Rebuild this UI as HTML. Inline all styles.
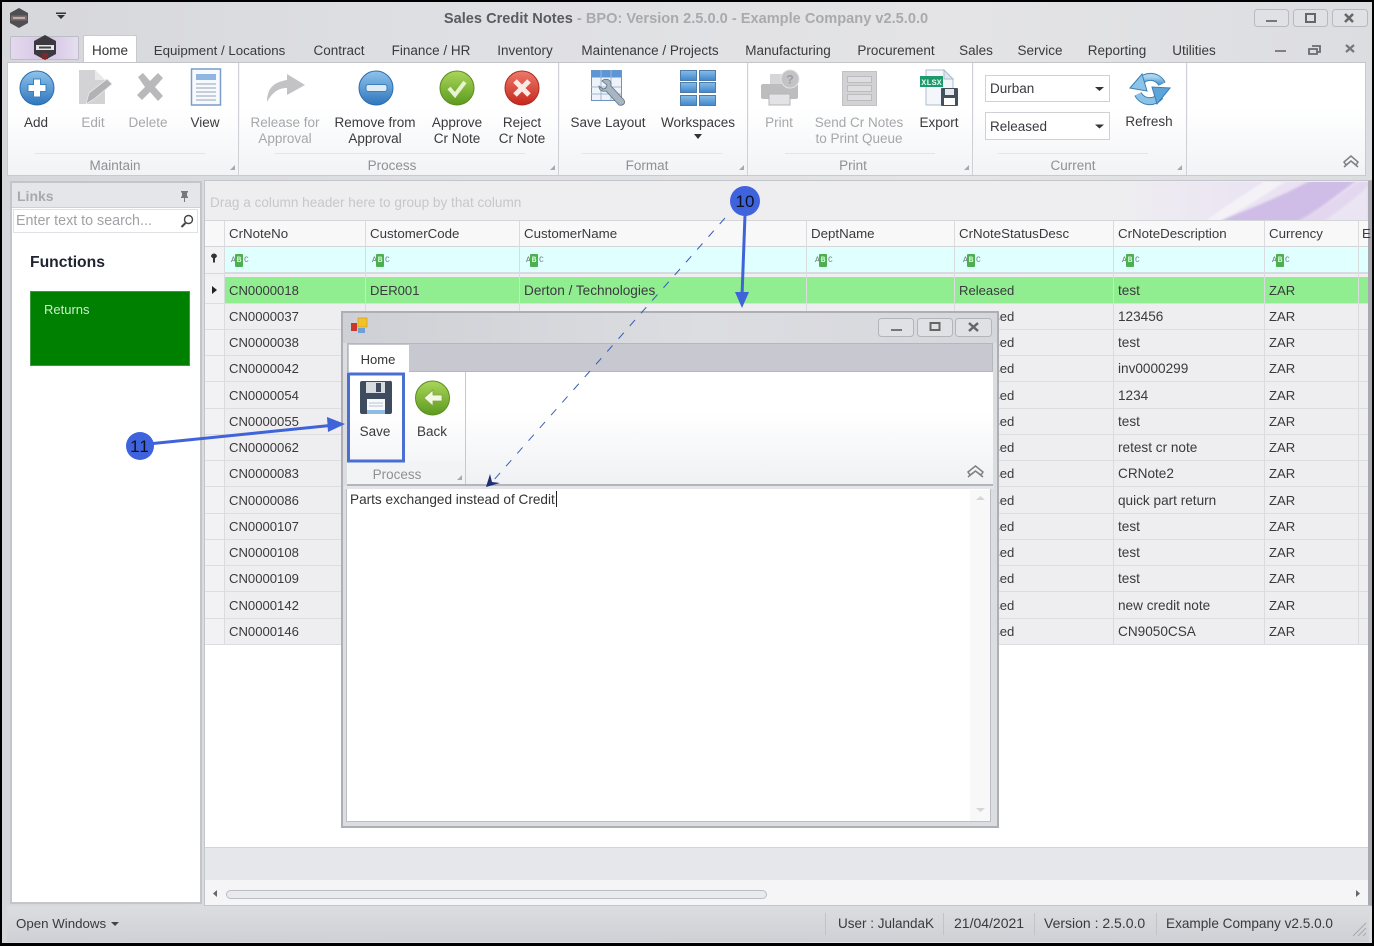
<!DOCTYPE html>
<html><head><meta charset="utf-8"><style>
*{box-sizing:border-box}
html,body{margin:0;padding:0;width:1374px;height:946px;overflow:hidden;background:#000}
#p{position:absolute;left:0;top:0;width:1374px;height:946px;background:#000;filter:blur(.35px)}
body{font-family:"Liberation Sans",sans-serif;font-size:13.5px;color:#3a3a3e}
div,span.t,.t{position:absolute}
.t{white-space:nowrap;line-height:16px;height:16px}
.c{transform:translateX(-50%);text-align:center}
.d{color:#a6a7aa}
.g{color:#8f9094}
svg{position:absolute;left:0;top:0;overflow:visible}
.r{position:absolute;left:0;width:1374px;height:16px;font-size:13.1px}
.r .t{top:0}
.a{left:229px}.b{left:370px}.e{left:524px;font-size:13.6px}.s{left:959px}.n{left:1118px;font-size:13.6px}.u{left:1269px}
.hd{font-size:13.3px}
.hd .e,.hd .n{font-size:13.3px}
.v{position:absolute;width:1px;background:#dadbdf}
.h{position:absolute;height:1px;background:#dcdde0;left:205px;width:1163px}
.abc{position:absolute;top:254px;width:20px;height:13px;font-size:8px;line-height:13px;color:#6d7a6d;font-family:"Liberation Mono",monospace}
.abc i{position:absolute;left:0;font-style:normal}
.abc b{position:absolute;left:4px;top:0;width:8px;height:13px;background:#4caf50;color:#d8f5d8;font-weight:bold;text-align:center;line-height:13px;border-radius:1px}
.abc em{position:absolute;left:13px;font-style:normal}
.sep{position:absolute;width:2px;background:#d0d1d6;border-right:1px solid #f6f6f8}
</style></head><body><div id="p">

<!-- window -->
<div style="left:2px;top:2px;width:1370px;height:941px;background:linear-gradient(90deg,#d6d7db 0,#dedfe3 30%,#e4e4e6 70%,#dcdde1 100%)"></div>

<!-- title -->
<div class="t c" style="left:686px;top:11px;font-weight:bold;font-size:14.6px;color:#a9aaae"><span style="color:#5a5b60">Sales Credit Notes</span> - BPO: Version 2.5.0.0 - Example Company v2.5.0.0</div>

<!-- tabs -->
<div style="left:10px;top:36px;width:69px;height:24px;background:linear-gradient(90deg,#e3d9ee,#d8c8e6 45%,#d9cde8 70%,#e6def0);border:1px solid #bdbdc6;border-radius:2px"></div>
<div style="left:83px;top:35px;width:54px;height:28px;background:#fff;border:1px solid #c9cace;border-bottom:0;border-radius:2px 2px 0 0"></div>
<div class="t c" style="left:110px;top:43px;color:#333">Home</div>
<div class="t c" style="left:219.500px;top:43px;font-size:13.300px">Equipment / Locations</div>
<div class="t c" style="left:339px;top:43px">Contract</div>
<div class="t c" style="left:431px;top:43px">Finance / HR</div>
<div class="t c" style="left:525px;top:43px">Inventory</div>
<div class="t c" style="left:650px;top:43px">Maintenance / Projects</div>
<div class="t c" style="left:788px;top:43px">Manufacturing</div>
<div class="t c" style="left:896px;top:43px">Procurement</div>
<div class="t c" style="left:976px;top:43px">Sales</div>
<div class="t c" style="left:1040px;top:43px">Service</div>
<div class="t c" style="left:1117px;top:43px">Reporting</div>
<div class="t c" style="left:1194px;top:43px">Utilities</div>

<!-- ribbon -->
<div style="left:7px;top:62px;width:1359px;height:114px;background:linear-gradient(180deg,#fff 0,#fff 40%,#f2f3f6 100%);border:1px solid #c9cace;border-top:1px solid #c4c5ca"></div>
<div class="sep" style="left:238px;top:63px;height:112px"></div>
<div class="sep" style="left:558px;top:63px;height:112px"></div>
<div class="sep" style="left:747px;top:63px;height:112px"></div>
<div class="sep" style="left:972px;top:63px;height:112px"></div>
<div class="sep" style="left:1186px;top:63px;height:112px"></div>
<div style="left:35px;top:153px;width:170px;height:1px;background:#e4e5e8"></div>
<div style="left:275px;top:153px;width:250px;height:1px;background:#e4e5e8"></div>
<div style="left:582px;top:153px;width:140px;height:1px;background:#e4e5e8"></div>
<div style="left:785px;top:153px;width:150px;height:1px;background:#e4e5e8"></div>
<div style="left:998px;top:153px;width:150px;height:1px;background:#e4e5e8"></div>

<div class="t c" style="left:36px;top:115px">Add</div>
<div class="t c d" style="left:93px;top:115px">Edit</div>
<div class="t c d" style="left:148px;top:115px">Delete</div>
<div class="t c" style="left:205px;top:115px">View</div>
<div class="t c d" style="left:285px;top:115px">Release for</div>
<div class="t c d" style="left:285px;top:131px">Approval</div>
<div class="t c" style="left:375px;top:115px">Remove from</div>
<div class="t c" style="left:375px;top:131px">Approval</div>
<div class="t c" style="left:457px;top:115px">Approve</div>
<div class="t c" style="left:457px;top:131px">Cr Note</div>
<div class="t c" style="left:522px;top:115px">Reject</div>
<div class="t c" style="left:522px;top:131px">Cr Note</div>
<div class="t c" style="left:608px;top:115px">Save Layout</div>
<div class="t c" style="left:698px;top:115px">Workspaces</div>
<div class="t c d" style="left:779px;top:115px">Print</div>
<div class="t c d" style="left:859px;top:115px">Send Cr Notes</div>
<div class="t c d" style="left:859px;top:131px">to Print Queue</div>
<div class="t c" style="left:939px;top:115px">Export</div>
<div class="t c" style="left:1149px;top:114px">Refresh</div>
<div class="t c g" style="left:115px;top:158px">Maintain</div>
<div class="t c g" style="left:392px;top:158px">Process</div>
<div class="t c g" style="left:647px;top:158px">Format</div>
<div class="t c g" style="left:853px;top:158px">Print</div>
<div class="t c g" style="left:1073px;top:158px">Current</div>

<div style="left:985px;top:75px;width:125px;height:27px;background:#fff;border:1px solid #d0d1d5"></div>
<div class="t" style="left:990px;top:81px">Durban</div>
<div style="left:985px;top:112px;width:125px;height:28px;background:#fff;border:1px solid #d0d1d5"></div>
<div class="t" style="left:990px;top:119px">Released</div>

<!-- links panel -->
<div style="left:10px;top:181px;width:192px;height:723px;background:#fff;border:2px solid #c4c5ca"></div>
<div style="left:12px;top:183px;width:188px;height:25px;background:#e5e6e9;border-bottom:1px solid #cfd0d4"></div>
<div class="t" style="left:17px;top:188px;font-weight:bold;color:#a8a9ae;font-size:14px">Links</div>
<div style="left:13px;top:209px;width:185px;height:24px;background:#fff;border:1px solid #e0e1e4"></div>
<div class="t" style="left:16px;top:213px;color:#a0a1a5;font-size:14.300px">Enter text to search...</div>
<div class="t" style="left:30px;top:254px;font-weight:bold;font-size:15.700px;color:#1f2430;line-height:17px">Functions</div>
<div style="left:30px;top:291px;width:160px;height:75px;background:#008000;border:1px solid #3f9a3f"></div>
<div class="t" style="left:44px;top:302px;color:#cdeecd;font-size:13px">Returns</div>

<!-- grid -->
<div style="left:204px;top:180px;width:1168px;height:726px;background:#fff;border:1px solid #c4c5ca;border-right:4px solid #a9aaaf"></div>
<div style="left:205px;top:181px;width:1163px;height:40px;background:#eeeef1;border-bottom:1px solid #d4d5d9"></div>
<svg width="1374" height="946" style="pointer-events:none">
<defs><filter id="sf"><feGaussianBlur stdDeviation="1"/></filter>
<linearGradient id="sw" x1="0" y1="0" x2="1" y2="0"><stop offset="0" stop-color="#eeeef1"/><stop offset=".5" stop-color="#ebe4f2"/><stop offset="1" stop-color="#e8dff2"/></linearGradient>
<clipPath id="gc"><rect x="1100" y="182" width="268" height="38"/></clipPath></defs>
<g clip-path="url(#gc)">
<rect x="1120" y="182" width="248" height="38" fill="url(#sw)"/>
<g filter="url(#sf)">
<path d="M1205 222C1225 205 1250 192 1268 178L1290 178C1270 192 1245 208 1218 222z" fill="#f4f2f7"/>
<path d="M1218 222C1245 210 1275 200 1315 178L1360 178C1340 192 1320 210 1296 222z" fill="#cfbde7"/>
<path d="M1296 222C1320 210 1345 192 1362 180L1370 180V222z" fill="#e2d7ef"/>
<path d="M1322 222C1340 210 1355 198 1368 186V222z" fill="#eae4f3"/>
</g></g>
</svg>
<div class="t" style="left:210px;top:195px;color:#c6c7cb;font-size:13.600px">Drag a column header here to group by that column</div>

<div style="left:205px;top:221px;width:1163px;height:26px;background:#f8f8f9;border-bottom:1px solid #d4d5d9"></div>
<div style="left:205px;top:247px;width:19px;height:26px;background:#f2f2f4"></div>
<div style="left:224px;top:247px;width:1144px;height:26px;background:#e0ffff;border-bottom:1px solid #d4dde0"></div>
<div style="left:205px;top:273px;width:1163px;height:4px;background:#f0f0f2;border-top:1px solid #d8d9dc"></div>

<div style="left:205px;top:277px;width:19px;height:367px;background:#f2f2f4"></div>
<div style="left:224px;top:303px;width:1144px;height:341px;background:#eeeef0"></div>
<div style="left:224px;top:277px;width:1144px;height:26px;background:#90ee90"></div>

<div class="h" style="top:303px"></div><div class="h" style="top:329px"></div><div class="h" style="top:355px"></div><div class="h" style="top:381px"></div><div class="h" style="top:408px"></div><div class="h" style="top:434px"></div><div class="h" style="top:460px"></div><div class="h" style="top:486px"></div><div class="h" style="top:513px"></div><div class="h" style="top:539px"></div><div class="h" style="top:565px"></div><div class="h" style="top:591px"></div><div class="h" style="top:618px"></div><div class="h" style="top:644px"></div>

<div class="v" style="left:224px;top:221px;height:423px"></div>
<div class="v" style="left:365px;top:221px;height:423px"></div>
<div class="v" style="left:519px;top:221px;height:423px"></div>
<div class="v" style="left:806px;top:221px;height:423px"></div>
<div class="v" style="left:954px;top:221px;height:423px"></div>
<div class="v" style="left:1113px;top:221px;height:423px"></div>
<div class="v" style="left:1264px;top:221px;height:423px"></div>
<div class="v" style="left:1358px;top:221px;height:423px"></div>

<div class="r hd" style="top:226px"><span class="t a">CrNoteNo</span><span class="t b">CustomerCode</span><span class="t e">CustomerName</span><span class="t" style="left:811px">DeptName</span><span class="t s">CrNoteStatusDesc</span><span class="t n">CrNoteDescription</span><span class="t u">Currency</span><span class="t" style="left:1362px">E</span></div>

<div class="abc" style="left:231px"><i>A</i><b>B</b><em>C</em></div>
<div class="abc" style="left:372px"><i>A</i><b>B</b><em>C</em></div>
<div class="abc" style="left:526px"><i>A</i><b>B</b><em>C</em></div>
<div class="abc" style="left:815px"><i>A</i><b>B</b><em>C</em></div>
<div class="abc" style="left:963px"><i>A</i><b>B</b><em>C</em></div>
<div class="abc" style="left:1122px"><i>A</i><b>B</b><em>C</em></div>
<div class="abc" style="left:1272px"><i>A</i><b>B</b><em>C</em></div>

<div class="r" style="top:283px"><span class="t a">CN0000018</span><span class="t b">DER001</span><span class="t e">Derton / Technologies</span><span class="t s">Released</span><span class="t n">test</span><span class="t u">ZAR</span></div>
<div class="r" style="top:309px"><span class="t a">CN0000037</span><span class="t s">Released</span><span class="t n">123456</span><span class="t u">ZAR</span></div>
<div class="r" style="top:335px"><span class="t a">CN0000038</span><span class="t s">Released</span><span class="t n">test</span><span class="t u">ZAR</span></div>
<div class="r" style="top:361px"><span class="t a">CN0000042</span><span class="t s">Released</span><span class="t n">inv0000299</span><span class="t u">ZAR</span></div>
<div class="r" style="top:388px"><span class="t a">CN0000054</span><span class="t s">Released</span><span class="t n">1234</span><span class="t u">ZAR</span></div>
<div class="r" style="top:414px"><span class="t a">CN0000055</span><span class="t s">Released</span><span class="t n">test</span><span class="t u">ZAR</span></div>
<div class="r" style="top:440px"><span class="t a">CN0000062</span><span class="t s">Released</span><span class="t n">retest cr note</span><span class="t u">ZAR</span></div>
<div class="r" style="top:466px"><span class="t a">CN0000083</span><span class="t s">Released</span><span class="t n">CRNote2</span><span class="t u">ZAR</span></div>
<div class="r" style="top:493px"><span class="t a">CN0000086</span><span class="t s">Released</span><span class="t n">quick part return</span><span class="t u">ZAR</span></div>
<div class="r" style="top:519px"><span class="t a">CN0000107</span><span class="t s">Released</span><span class="t n">test</span><span class="t u">ZAR</span></div>
<div class="r" style="top:545px"><span class="t a">CN0000108</span><span class="t s">Released</span><span class="t n">test</span><span class="t u">ZAR</span></div>
<div class="r" style="top:571px"><span class="t a">CN0000109</span><span class="t s">Released</span><span class="t n">test</span><span class="t u">ZAR</span></div>
<div class="r" style="top:598px"><span class="t a">CN0000142</span><span class="t s">Released</span><span class="t n">new credit note</span><span class="t u">ZAR</span></div>
<div class="r" style="top:624px"><span class="t a">CN0000146</span><span class="t s">Released</span><span class="t n">CN9050CSA</span><span class="t u">ZAR</span></div>

<!-- grid bottom -->
<div style="left:205px;top:847px;width:1163px;height:33px;background:#e6e7ea;border-top:1px solid #d2d3d7"></div>
<div style="left:205px;top:880px;width:1163px;height:25px;background:#f5f5f7"></div>
<div style="left:226px;top:890px;width:541px;height:9px;background:#e9eaed;border:1px solid #bcbdc2;border-radius:5px"></div>

<!-- status -->
<div style="left:7px;top:906px;width:1362px;height:36px;background:linear-gradient(180deg,#dcdde0,#cfd0d5)"></div>
<div class="t" style="left:16px;top:916px;font-size:13.300px">Open Windows</div>
<div class="t" style="left:838px;top:916px;font-size:13.500px">User : JulandaK</div>
<div class="t" style="left:954px;top:915px;font-size:14px">21/04/2021</div>
<div class="t" style="left:1044px;top:915px;font-size:14px">Version : 2.5.0.0</div>
<div class="t" style="left:1166px;top:916px;font-size:13.600px">Example Company v2.5.0.0</div>
<div class="v" style="left:825px;top:913px;height:22px;background:#c2c3c8"></div>
<div class="v" style="left:943px;top:913px;height:22px;background:#c2c3c8"></div>
<div class="v" style="left:1034px;top:913px;height:22px;background:#c2c3c8"></div>
<div class="v" style="left:1156px;top:913px;height:22px;background:#c2c3c8"></div>

<!-- main icons -->
<svg width="1374" height="946">
<defs>
<linearGradient id="bl" x1="0" y1="0" x2="0" y2="1"><stop offset="0" stop-color="#8fc3ea"/><stop offset="1" stop-color="#2f76bd"/></linearGradient>
<linearGradient id="gr" x1="0" y1="0" x2="0" y2="1"><stop offset="0" stop-color="#a9d65a"/><stop offset="1" stop-color="#5c9a1e"/></linearGradient>
<linearGradient id="rd" x1="0" y1="0" x2="0" y2="1"><stop offset="0" stop-color="#ee7a6a"/><stop offset="1" stop-color="#c5261c"/></linearGradient>
<linearGradient id="tb" x1="0" y1="0" x2="0" y2="1"><stop offset="0" stop-color="#88bde8"/><stop offset="1" stop-color="#3f86cc"/></linearGradient>
<linearGradient id="rf" x1="0" y1="0" x2="0" y2="1"><stop offset="0" stop-color="#a9d4ef"/><stop offset="1" stop-color="#4f98cf"/></linearGradient>
</defs>
<!-- app logo -->
<path d="M19 8l9 5v10l-9 5-9-5V13z" fill="#4f4f53"/><rect x="11" y="15.500" width="16" height="5" fill="#7e6a6a"/><rect x="13" y="17" width="12" height="2" fill="#b8b0b0"/>
<path d="M57 15h8l-4 4z M56 12.500h10v1.500H56z" fill="#333"/>
<path d="M45 35l11 6v13l-11 6-11-6V41z" fill="#3c3a3e"/><rect x="36" y="45" width="18" height="5" fill="#e8e8e8"/><rect x="39" y="46.500" width="12" height="2" fill="#444"/><rect x="42" y="53" width="6" height="6" fill="#7a2a2a"/>
<!-- win buttons -->
<g fill="#e0e1e5" stroke="#b9bac0"><rect x="1254.500" y="9.500" width="34" height="17" rx="3"/><rect x="1293.500" y="9.500" width="34" height="17" rx="3"/><rect x="1332.500" y="9.500" width="35" height="17" rx="3"/></g>
<rect x="1266" y="20" width="11" height="2" fill="#777"/>
<rect x="1306" y="14" width="9" height="8" fill="none" stroke="#666" stroke-width="2"/>
<path d="M1345 14l8 8m0-8l-8 8" stroke="#666" stroke-width="2.500"/>
<rect x="1275" y="50" width="11" height="2" fill="#808084"/>
<path d="M1312 46h8v6h-3M1309 49h8v5h-8z" fill="none" stroke="#6a6a70" stroke-width="1.800"/>
<path d="M1346 45l8 7m0-7l-8 7" stroke="#77777c" stroke-width="2.200"/>
<!-- add -->
<circle cx="37" cy="88" r="17" fill="url(#bl)" stroke="#2a6db0"/>
<path d="M33.500 79h7v5.500H46v7h-5.500V97h-7v-5.500H28v-7h5.500z" fill="#fff" stroke="#3c7fc0"/>
<!-- edit -->
<path d="M79 70h16l10 10v24H79z" fill="#d3d3d5"/><path d="M95 70l10 10H95z" fill="#e9e9ea"/>
<path d="M86 104l3-11 18-14 5 5-18 15z" fill="#b2b2b4" stroke="#e8e8e8" stroke-width=".8"/>
<!-- delete -->
<path d="M138 77l5-4 7 8 8-8 5 5-8 9 8 9-5 5-8-9-8 8-5-5 8-8z" fill="#b9b9bb"/>
<!-- view -->
<rect x="191.500" y="69" width="29" height="36" fill="#f6f9fd" stroke="#7c9cc8" stroke-width="1.500"/>
<rect x="196" y="74" width="20" height="6" fill="#8fb6e0"/>
<path d="M196 84h20M196 88h20M196 92h20M196 96h20M196 100h20" stroke="#a8b4c4" stroke-width="1.300"/>
<!-- release -->
<path d="M267 102c0-14 7-20 20-22v-6l18 11-18 10v-7c-9 0-15 5-20 14z" fill="#c3c3c5"/>
<!-- remove -->
<circle cx="376" cy="88" r="17" fill="url(#bl)" stroke="#2a6db0"/>
<rect x="366" y="84.500" width="21" height="7" rx="2.500" fill="#dfeaf5" stroke="#3c7fc0"/>
<!-- approve -->
<circle cx="457" cy="88" r="17" fill="url(#gr)" stroke="#5a8e1e"/>
<path d="M449 88l6 7 10-13" fill="none" stroke="#e8f3d2" stroke-width="4"/>
<!-- reject -->
<circle cx="522" cy="88" r="17" fill="url(#rd)" stroke="#ab2a20"/>
<path d="M515 81l14 14m0-14l-14 14" stroke="#fbe9e6" stroke-width="5"/>
<!-- save layout -->
<rect x="591.500" y="70.500" width="30" height="30" fill="#eef3f9" stroke="#6f94bf"/>
<rect x="591.500" y="70.500" width="30" height="7" fill="#5d96d6"/>
<path d="M591 87h30M591 94h30M601 70v30M611 70v30" stroke="#9db7d5"/>
<path d="M602 81c3-3 8-2 9 2 0 1 0 2 0 3l13 14c2 4-2 6-5 5l-13-14c-4 1-7-1-7-5l4 3 3-1 1-3z" fill="#a8b5c3" stroke="#5f6e7e" stroke-width=".8"/>
<!-- workspaces -->
<g fill="url(#tb)" stroke="#4d7cab"><rect x="680.500" y="70.500" width="16" height="10"/><rect x="699.500" y="70.500" width="16" height="10"/><rect x="680.500" y="82.500" width="16" height="10"/><rect x="699.500" y="82.500" width="16" height="10"/><rect x="680.500" y="95.500" width="16" height="10"/><rect x="699.500" y="95.500" width="16" height="10"/></g>
<path d="M694 134h8l-4 5z" fill="#333"/>
<!-- print -->
<rect x="770" y="74" width="20" height="16" fill="#d6d6d8"/>
<rect x="761" y="84" width="37" height="15" rx="2" fill="#bdbdbf"/>
<rect x="769" y="94" width="21" height="11" fill="#e3e3e5" stroke="#b5b5b7"/>
<circle cx="790" cy="79" r="9" fill="#c3c3c5" stroke="#e2e2e4"/>
<text x="790" y="83.500" font-size="12" font-weight="bold" text-anchor="middle" fill="#9c9c9e" font-family="Liberation Sans">?</text>
<!-- queue -->
<rect x="842.500" y="71.500" width="34" height="34" fill="#d2d2d4" stroke="#c2c2c4"/>
<g fill="#dedee0" stroke="#bcbcbe"><rect x="847.500" y="76.500" width="24" height="6"/><rect x="847.500" y="85.500" width="24" height="6"/><rect x="847.500" y="94.500" width="24" height="6"/></g>
<!-- export -->
<path d="M926 70h18l9 9v26h-27z" fill="#f3f6fa" stroke="#aebccd"/><path d="M944 70l9 9h-9z" fill="#dfe7f0" stroke="#aebccd"/>
<rect x="920" y="76" width="23" height="11" fill="#1d9a6c"/>
<text x="931.500" y="85" font-size="8.500" font-weight="bold" text-anchor="middle" fill="#e5f7ef" font-family="Liberation Mono">XLSX</text>
<rect x="941" y="88" width="17" height="18" rx="1" fill="#45505f"/><rect x="945" y="89" width="9" height="6" fill="#e5e8ec"/><rect x="944" y="98" width="11" height="7" fill="#fff"/>
<!-- refresh -->
<path d="M1140 82A13 13 0 0 1 1162 84" fill="none" stroke="#3c7fb5" stroke-width="8"/>
<path d="M1140 82A13 13 0 0 1 1162 84" fill="none" stroke="url(#rf)" stroke-width="6"/>
<path d="M1160 96A13 13 0 0 1 1138 94" fill="none" stroke="#3c7fb5" stroke-width="8"/>
<path d="M1160 96A13 13 0 0 1 1138 94" fill="none" stroke="#8cc2e6" stroke-width="6"/>
<path d="M1130 88L1142 74L1147 91z" fill="#8cc4e8" stroke="#3c7fb5"/>
<path d="M1170 88L1157 104L1152 87z" fill="#5da4d8" stroke="#3c7fb5"/>
<!-- combos -->
<path d="M1095 87h9l-4.500 4z M1095 124.500h9l-4.500 4z" fill="#333"/>
<!-- group grips -->
<g fill="#a8a9ad"><path d="M235 170v-5l-5 5z"/><path d="M555 170v-5l-5 5z"/><path d="M744 170v-5l-5 5z"/><path d="M969 170v-5l-5 5z"/><path d="M1182 170v-5l-5 5z"/></g>
<path d="M1344 162l7-6 7 6-2 3-5-4-5 4z M1344 167l7-6 7 6" fill="none" stroke="#808186" stroke-width="1.500"/>
<!-- pin -->
<path d="M181 191h7v1l-1 1v3l1 1v1h-3v4h-1v-4h-3v-1l1-1v-3l-1-1z" fill="#77777c"/>
<!-- search -->
<circle cx="188.500" cy="219.500" r="4" fill="none" stroke="#444" stroke-width="1.400"/><path d="M185.500 223l-4 4" stroke="#444" stroke-width="2"/>
<!-- filter funnel/marker -->
<path d="M211 256.500a3 3 0 1 1 6 0l-2 2v4h-2v-4z" fill="#333"/>
<path d="M212 286l5 4-5 4z" fill="#222"/>
<!-- scroll arrows, status -->
<path d="M217 890v7l-4-3.500z" fill="#666"/><path d="M1356 890v7l4-3.500z" fill="#666"/>
<path d="M111 922h8l-4 4z" fill="#444"/>
<path d="M1353 936l13-13M1358 936l8-8M1363 936l3-3" stroke="#a8a9ad" fill="none"/>
</svg>

<!-- dialog -->
<div style="left:341px;top:311px;width:658px;height:517px;background:#dcdde1;border:2px solid #aeafb4"></div>
<div style="left:343px;top:313px;width:654px;height:30px;background:linear-gradient(90deg,#cfd0d5,#dcdde1 55%,#d6d7dc)"></div>
<div style="left:347px;top:343px;width:646px;height:29px;background:#c8c9d0;border:1px solid #b6b7be;border-bottom:1px solid #b6b7be"></div>
<div style="left:349px;top:345px;width:60px;height:28px;background:#fff"></div>
<div class="t c" style="left:378px;top:352px;font-size:13px;color:#333">Home</div>
<div style="left:347px;top:372px;width:646px;height:114px;background:linear-gradient(180deg,#fff 0,#fff 35%,#f0f1f4 100%);border-bottom:2px solid #b4b5ba"></div>
<div style="left:347px;top:462px;width:118px;height:22px;background:#f2f3f5"></div>
<div class="sep" style="left:465px;top:372px;height:112px;background:#c8c9ce;width:1px;border:0"></div>
<div class="t c" style="left:375px;top:424px;color:#3a3a3e">Save</div>
<div class="t c" style="left:432px;top:424px;color:#3a3a3e">Back</div>
<div class="t c g" style="left:397px;top:467px">Process</div>
<div style="left:346px;top:489px;width:645px;height:333px;background:#fff;border:1px solid #bdbec3;border-top:0"></div>
<div style="left:970px;top:490px;width:20px;height:331px;background:#f8f8f9"></div>
<div class="t" style="left:350px;top:492px;color:#333;font-size:13.600px">Parts exchanged instead of Credit</div>
<div style="left:556px;top:491px;width:1px;height:16px;background:#222"></div>
<div style="left:344px;top:486px;width:650px;height:3px;background:#e4e5e8"></div>
<div style="left:344px;top:823px;width:650px;height:3px;background:#dcdde1"></div>

<svg width="1374" height="946">
<!-- dialog icon -->
<rect x="351" y="323" width="6" height="8" fill="#c9362b"/><rect x="358" y="318" width="9" height="9" fill="#f2c12e" stroke="#c99a18" stroke-width=".6"/><rect x="358" y="328" width="7" height="5" fill="#6d9fd8"/>
<!-- dialog buttons -->
<g fill="#e0e1e5" stroke="#b4b5bb"><rect x="878.500" y="318.500" width="35" height="18" rx="3"/><rect x="917.500" y="318.500" width="35" height="18" rx="3"/><rect x="955.500" y="318.500" width="36" height="18" rx="3"/></g>
<rect x="891" y="329" width="11" height="2" fill="#777"/>
<rect x="930.500" y="323" width="9" height="7" fill="none" stroke="#666" stroke-width="2"/>
<path d="M969 323l9 8m0-8l-9 8" stroke="#666" stroke-width="2.500"/>
<!-- save -->
<path d="M360 383a2 2 0 0 1 2-2h27a2 2 0 0 1 3 2v29a2 2 0 0 1-2 2h-28a2 2 0 0 1-2-2z" fill="#3f4c60"/>
<rect x="366" y="382" width="19" height="11" fill="#d7dbe0"/><rect x="376" y="383" width="5" height="9" fill="#3f4c60"/>
<rect x="367" y="399" width="18" height="15" fill="#f7f9fb"/><path d="M369 403h14M369 406h14" stroke="#b9c4d0"/><rect x="367" y="410" width="18" height="4" fill="#8fbce0"/>
<!-- back -->
<circle cx="432.500" cy="398" r="17" fill="url(#gr)" stroke="#5a8e1e"/>
<path d="M424 398l9-8v5h9v6h-9v5z" fill="#f2f7e6" stroke="#7ea83c" stroke-width=".8"/>
<!-- misc -->
<path d="M462 480v-5l-5 5z" fill="#a8a9ad"/>
<path d="M968 472l7.500-6 7.500 6-2 3-5.500-4-5.500 4z M968 477l7.500-6 7.500 6" fill="none" stroke="#808186" stroke-width="1.500"/>
<path d="M976 500h9l-4.500-4z M976 808h9l-4.500 4z" fill="#d4d5d8"/>
<!-- annotations -->
<rect x="348.500" y="374" width="55" height="87" fill="none" stroke="#4a6fd1" stroke-width="3"/>
<path d="M725 218L493 481" stroke="#3d5fb5" stroke-width="1" stroke-dasharray="8 9" fill="none"/>
<path d="M486 487l4-13 2 8 8 1z" fill="#1e2f73"/>
<path d="M745 215L742 296" stroke="#3f63d8" stroke-width="3"/>
<path d="M735 292h14l-7 16z" fill="#3f63d8"/>
<path d="M153 443.500L330 425.500" stroke="#3f63d8" stroke-width="3"/>
<path d="M327 417l18 7-17 8z" fill="#3f63d8"/>
<circle cx="745" cy="201" r="15" fill="#3f63dd"/>
<circle cx="140" cy="446" r="14" fill="#3f63dd"/>
<text x="745" y="207" font-size="17" text-anchor="middle" fill="#0c1220" font-family="Liberation Sans">10</text>
<text x="140" y="452" font-size="17" text-anchor="middle" fill="#0c1220" font-family="Liberation Sans" letter-spacing="1">11</text>
</svg>
</div></body></html>
